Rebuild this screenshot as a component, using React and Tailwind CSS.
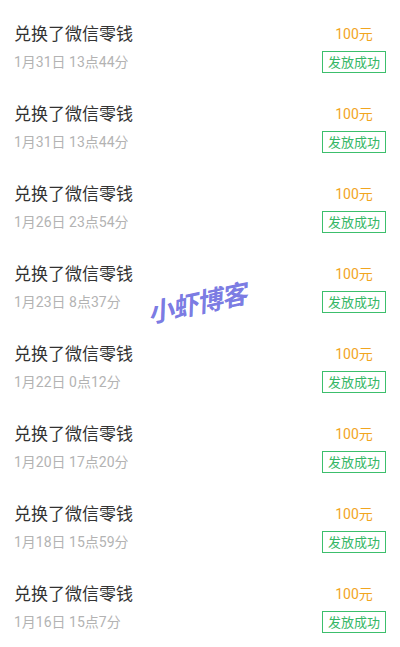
import React from 'react'

const RECORDS = [
  '1月31日 13点44分',
  '1月31日 13点44分',
  '1月26日 23点54分',
  '1月23日 8点37分',
  '1月22日 0点12分',
  '1月20日 17点20分',
  '1月18日 15点59分',
  '1月16日 15点7分',
]

const FONT = { fontFamily: 'Roboto, "Noto Sans CJK SC", sans-serif' }

export default function App() {
  return (
    <div className="relative w-[400px] h-[647px] bg-white overflow-hidden" style={FONT}>
      {RECORDS.map((time, i) => (
        <div key={i} className="flex justify-between h-[80px] pl-[14px] pr-[14px]">
          <div className="pt-[22px]">
            <div className="text-[17px] leading-[24px] text-[#333333]">兑换了微信零钱</div>
            <div className="mt-[6px] text-[14px] leading-[20px] text-[#b3b3b3]">{time}</div>
          </div>
          <div className="flex flex-col items-center pt-[24px]">
            <div className="text-[14px] leading-[20px] text-[#f2a51f]">100元</div>
            <div className="mt-[7px] w-[64px] h-[22px] flex items-center justify-center border border-[#3cbf6c] text-[13px] leading-none text-[#36b765]">
              发放成功
            </div>
          </div>
        </div>
      ))}
      <div className="absolute left-[147px] top-[285px] text-[26px] font-bold italic text-[#6a6ae0]/90 -rotate-[12deg] tracking-[-1px]">
        小虾博客
      </div>
    </div>
  )
}
